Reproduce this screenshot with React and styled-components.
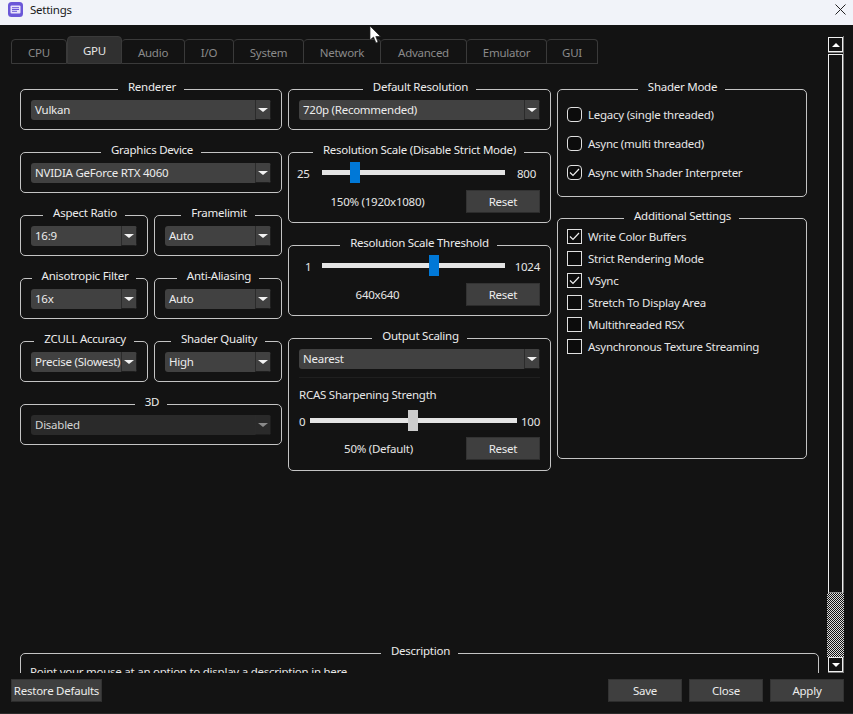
import React from "react";
import styled, { createGlobalStyle } from "styled-components";

const Global = createGlobalStyle`
  html, body { margin: 0; padding: 0; background: #131313; }
  body {
    font-family: "Noto Sans", "Open Sans", sans-serif;
    font-size: 11.5px;
    letter-spacing: -0.25px;
    color: #e6e6e6;
  }
  * { box-sizing: border-box; }
`;

const Window = styled.div`
  position: relative;
  width: 853px;
  height: 714px;
  display: flex;
  flex-direction: column;
  overflow: hidden;
  background: #131313;
  border-bottom: 1px solid #2a2a2a;
`;
const TitleBar = styled.div`
  height: 25px;
  flex: none;
  background: #f1f3f9;
  color: #1a1a1a;
  display: flex;
  align-items: center;
  padding: 0 7px 6px 8px;
  gap: 7px;
`;
const TitleText = styled.span`flex: 1;`;
const Body = styled.div`
  flex: 1;
  min-height: 0;
  display: flex;
  flex-direction: column;
  padding: 11px 9px 11px 11px;
`;
const Main = styled.div`
  flex: 1;
  min-height: 0;
  display: flex;
  gap: 2px;
`;
const Pane = styled.div`
  width: 816px;
  display: flex;
  flex-direction: column;
  overflow: hidden;
`;
const Tabs = styled.div`display: flex; height: 28px; flex: none; align-items: flex-end;`;
const Tab = styled.div`
  width: ${p => p.$w}px;
  height: ${p => (p.$active ? 28 : 25)}px;
  background: ${p => (p.$active ? "#303030" : "transparent")};
  color: ${p => (p.$active ? "#e6e6e6" : "#8a8a8a")};
  border: 1px solid #3a3a3a;
  border-left-width: ${p => (p.$first || p.$active ? 1 : 0)}px;
  border-radius: 4px 4px 0 0;
  display: flex;
  align-items: center;
  justify-content: center;
  padding-top: ${p => (p.$active ? 0 : 1)}px;
`;
const Columns = styled.div`
  display: flex;
  gap: 6px;
  padding: 18px 0 0 9px;
  align-items: flex-start;
`;
const Col = styled.div`
  width: ${p => p.$w}px;
  flex: none;
  display: flex;
  flex-direction: column;
  gap: ${p => p.$gap || 15}px;
`;
const Pair = styled.div`display: grid; grid-template-columns: 128px 128px; gap: 6px;`;
const Group = styled.fieldset`
  margin: 0;
  min-width: 0;
  height: ${p => p.$h}px;
  border: 1px solid #c4c4c4;
  border-radius: 5px;
  padding: ${p => p.$pad || "4px 10px 0"};
`;
const Legend = styled.legend`
  margin: 0 auto;
  padding: 0 8px 0 10px;
  height: 14px;
  line-height: 10px;
  color: #ececec;
  white-space: nowrap;
`;
const Combo = styled.div`
  position: relative;
  height: 20px;
  border-radius: 3px;
  background: ${p => (p.$disabled ? "#2a2a2a" : "#414141")};
  color: ${p => (p.$disabled ? "#d4d4d4" : "#ececec")};
  display: flex;
  align-items: center;
  padding: 0 16px 2px 4px;
  white-space: nowrap;
  overflow: hidden;
`;
const ComboButton = styled.span`
  position: absolute;
  right: 0;
  top: 0;
  width: 16px;
  height: 20px;
  background: ${p => (p.$disabled ? "#2a2a2a" : "#414141")};
  border-left: 1px solid #2b2b2b;
  border-right: 1px solid #1e1e1e;
  border-bottom: 1px solid #1e1e1e;
  display: flex;
  align-items: center;
  justify-content: center;
  &::after {
    content: "";
    border-style: solid;
    border-width: 4px 5px 0;
    border-color: ${p => (p.$disabled ? "#8a8a8a" : "#f2f2f2")} transparent transparent;
  }
`;
const SliderRow = styled.div`
  display: grid;
  grid-template-columns: ${p => p.$cols};
  align-items: center;
  height: 22px;
  margin-top: ${p => p.$mt || 0}px;
`;
const End = styled.span`
  text-align: ${p => p.$align || "left"};
  padding: 3px 0 0 ${p => p.$pl || 0}px;
`;
const Track = styled.div`
  position: relative;
  height: 5px;
  background: #e4e4e4;
`;
const Thumb = styled.div`
  position: absolute;
  top: -8px;
  width: 10px;
  height: 21px;
  background: ${p => (p.$grey ? "#cccccc" : "#0078d7")};
`;
const ValueRow = styled.div`
  display: flex;
  align-items: center;
  margin-top: ${p => p.$mt}px;
`;
const Value = styled.span`flex: 1; text-align: center; padding-right: 8px;`;
const Button = styled.div`
  width: ${p => p.$w || 74}px;
  height: 23px;
  flex: none;
  background: #3f3f3f;
  border: 1px solid #333;
  border-bottom-color: #2c2c2c;
  color: #ececec;
  white-space: nowrap;
  display: flex;
  align-items: center;
  justify-content: center;
`;
const Divider = styled.div`height: 1px; background: #1f1f1f; margin: 8px 0;`;
const SubLabel = styled.div`height: 18px; line-height: 18px;`;
const CheckList = styled.div`
  display: flex;
  flex-direction: column;
  gap: ${p => p.$gap}px;
  padding-top: ${p => p.$top}px;
`;
const CheckRow = styled.div`
  display: flex;
  align-items: center;
  gap: 6px;
  height: 16px;
  white-space: nowrap;
`;
const Box = styled.span`
  width: 15px;
  height: 15px;
  flex: none;
  background: #0c0c0c;
  border: 1px solid #e0e0e0;
  border-radius: ${p => (p.$round ? 4 : 0)}px;
  display: flex;
  align-items: center;
  justify-content: center;
`;
const Description = styled.fieldset`
  margin: 175px 0 0 9px;
  width: 799px;
  height: 60px;
  flex: none;
  border: 1px solid #c4c4c4;
  border-radius: 5px;
  padding: 4px 9px 0;
`;
const Scrollbar = styled.div`
  width: 16px;
  flex: none;
  display: flex;
  flex-direction: column;
  border-right: 1px solid #7a7a7a;
  border-bottom: 1px solid #7a7a7a;
`;
const ScrollBtn = styled.div`
  height: 15px;
  flex: none;
  border: 1px solid #f0f0f0;
  margin: ${p => (p.$up ? "1px 0 2px" : "0")};
  box-shadow: ${p => (p.$up ? "0 1px 0 #7a7a7a" : "none")};
  display: flex;
  align-items: center;
  justify-content: center;
  &::after {
    content: "";
    border-style: solid;
    border-width: ${p => (p.$up ? "0 4px 4px" : "4px 4px 0")};
    border-color: ${p => (p.$up ? "transparent transparent #fff" : "#fff transparent transparent")};
  }
`;
const ScrollHandle = styled.div`
  flex: 1;
  border: 1px solid #f0f0f0;
  border-bottom-color: #8a8a8a;
`;
const ScrollPage = styled.div`
  height: 64px;
  flex: none;
  margin: 0 -1px;
  background-color: #111;
  background-image: conic-gradient(#ddd 25%, #111 0 50%, #ddd 0 75%, #111 0);
  background-size: 2px 2px;
`;
const Footer = styled.div`
  display: flex;
  align-items: center;
  gap: 7px;
  height: 23px;
  flex: none;
  margin-top: 6px;
`;
const Spacer = styled.div`flex: 1;`;
const Cursor = styled.svg`position: absolute; left: 369px; top: 25px;`;

const TABS = [["CPU", 56], ["GPU", 55], ["Audio", 63], ["I/O", 49], ["System", 70], ["Network", 77], ["Advanced", 86], ["Emulator", 80], ["GUI", 51]];

const Select = ({ value, disabled }) => (
  <Combo $disabled={disabled}>{value}<ComboButton $disabled={disabled} /></Combo>
);
const SelectGroup = ({ title, value, disabled }) => (
  <Group $h={48}><Legend>{title}</Legend><Select value={value} disabled={disabled} /></Group>
);
const Check = ({ label, checked, round }) => (
  <CheckRow>
    <Box $round={round}>
      {checked && (
        <svg width="11" height="9" viewBox="0 0 11 9" fill="none">
          <path d="M1 4.5 L4 7.5 L10 1" stroke="#f0f0f0" strokeWidth="1.2" />
        </svg>
      )}
    </Box>
    {label}
  </CheckRow>
);

export default function App() {
  return (
    <Window>
      <Global />
      <TitleBar>
        <svg width="15" height="15" viewBox="0 0 15 15">
          <rect width="15" height="15" rx="3.5" fill="#6a57d8" />
          <rect x="2.5" y="3.5" width="10" height="8" rx="1" fill="#e7e3fb" />
          <path d="M4 5.7h7M4 7.5h7M4 9.3h5" stroke="#6a57d8" strokeWidth="1" />
        </svg>
        <TitleText>Settings</TitleText>
        <svg width="11" height="11" viewBox="0 0 11 11">
          <path d="M0.5 0.5 L10.5 10.5 M10.5 0.5 L0.5 10.5" stroke="#222" strokeWidth="1" />
        </svg>
      </TitleBar>
      <Body>
        <Main>
          <Pane>
            <Tabs>
              {TABS.map(([t, w], i) => (
                <Tab key={t} $w={w} $active={t === "GPU"} $first={i === 0}>{t}</Tab>
              ))}
            </Tabs>
            <Columns>
              <Col $w={262}>
                <SelectGroup title="Renderer" value="Vulkan" />
                <SelectGroup title="Graphics Device" value="NVIDIA GeForce RTX 4060" />
                <Pair>
                  <SelectGroup title="Aspect Ratio" value="16:9" />
                  <SelectGroup title="Framelimit" value="Auto" />
                </Pair>
                <Pair>
                  <SelectGroup title="Anisotropic Filter" value="16x" />
                  <SelectGroup title="Anti-Aliasing" value="Auto" />
                </Pair>
                <Pair>
                  <SelectGroup title="ZCULL Accuracy" value="Precise (Slowest)" />
                  <SelectGroup title="Shader Quality" value="High" />
                </Pair>
                <SelectGroup title="3D" value="Disabled" disabled />
              </Col>
              <Col $w={263}>
                <SelectGroup title="Default Resolution" value="720p (Recommended)" />
                <Group $h={78} $pad="2px 10px 0 8px">
                  <Legend>Resolution Scale (Disable Strict Mode)</Legend>
                  <SliderRow $cols="25px 183px 1fr">
                    <End>25</End>
                    <Track><Thumb style={{ left: 28 }} /></Track>
                    <End $pl={12}>800</End>
                  </SliderRow>
                  <ValueRow $mt={7}><Value>150% (1920x1080)</Value><Button>Reset</Button></ValueRow>
                </Group>
                <Group $h={78} $pad="2px 10px 0 8px">
                  <Legend>Resolution Scale Threshold</Legend>
                  <SliderRow $cols="25px 183px 1fr">
                    <End $pl={8}>1</End>
                    <Track><Thumb style={{ left: 107 }} /></Track>
                    <End $align="right">1024</End>
                  </SliderRow>
                  <ValueRow $mt={7}><Value>640x640</Value><Button>Reset</Button></ValueRow>
                </Group>
                <Group $h={140}>
                  <Legend>Output Scaling</Legend>
                  <Select value="Nearest" />
                  <Divider />
                  <SubLabel>RCAS Sharpening Strength</SubLabel>
                  <SliderRow $cols="11px 207px 1fr" $mt={5}>
                    <End>0</End>
                    <Track><Thumb $grey style={{ left: 98 }} /></Track>
                    <End $align="right">100</End>
                  </SliderRow>
                  <ValueRow $mt={6}><Value>50% (Default)</Value><Button>Reset</Button></ValueRow>
                </Group>
              </Col>
              <Col $w={250} $gap={14}>
                <Group $h={115} $pad="0 10px 0 9px">
                  <Legend>Shader Mode</Legend>
                  <CheckList $gap={13} $top={10}>
                    <Check round label="Legacy (single threaded)" />
                    <Check round label="Async (multi threaded)" />
                    <Check round checked label="Async with Shader Interpreter" />
                  </CheckList>
                </Group>
                <Group $h={248} $pad="0 10px 0 9px">
                  <Legend>Additional Settings</Legend>
                  <CheckList $gap={6} $top={3}>
                    <Check checked label="Write Color Buffers" />
                    <Check label="Strict Rendering Mode" />
                    <Check checked label="VSync" />
                    <Check label="Stretch To Display Area" />
                    <Check label="Multithreaded RSX" />
                    <Check label="Asynchronous Texture Streaming" />
                  </CheckList>
                </Group>
              </Col>
            </Columns>
            <Description>
              <Legend>Description</Legend>
              Point your mouse at an option to display a description in here.
            </Description>
          </Pane>
          <Scrollbar>
            <ScrollBtn $up />
            <ScrollHandle />
            <ScrollPage />
            <ScrollBtn />
          </Scrollbar>
        </Main>
        <Footer>
          <Button $w={91}>Restore Defaults</Button>
          <Spacer />
          <Button>Save</Button>
          <Button>Close</Button>
          <Button>Apply</Button>
        </Footer>
      </Body>
      <Cursor width="14" height="20" viewBox="0 0 14 20">
        <path d="M1 1 L1 15 L4.5 12 L7 18 L9 17 L6.8 11.5 L11.5 11.5 Z" fill="#fff" stroke="#222" strokeWidth="0.7" />
      </Cursor>
    </Window>
  );
}
